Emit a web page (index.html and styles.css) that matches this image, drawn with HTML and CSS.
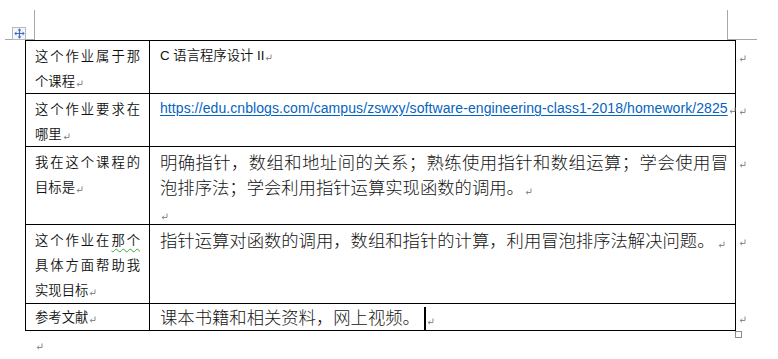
FILE: index.html
```html
<!DOCTYPE html>
<html lang="zh-CN">
<head>
<meta charset="utf-8">
<title>作业表</title>
<link rel="stylesheet" href="styles.css">
</head>
<body>
<div class="page">
  <div class="mark-line tl-v"></div>
  <div class="mark-line tl-h"></div>
  <div class="mark-line tr-v"></div>
  <div class="mark-line tr-h"></div>
  <div class="move-handle">
    <svg width="11" height="11" viewBox="0 0 11 11" aria-hidden="true">
      <path d="M5.5 1 V10 M1 5.5 H10" stroke="#3a6fc8" stroke-width="1.2" fill="none"/>
      <path d="M5.5 0.3 L3.6 2.4 H7.4 Z M5.5 10.7 L3.6 8.6 H7.4 Z M0.3 5.5 L2.4 3.6 V7.4 Z M10.7 5.5 L8.6 3.6 V7.4 Z" fill="#3a6fc8"/>
    </svg>
  </div>

  <table class="grid">
    <colgroup>
      <col class="c-label">
      <col class="c-body">
      <col class="c-end">
    </colgroup>
    <tr class="row">
      <td class="label">这个作业属于那个课程<svg class="pm" viewBox="0 0 7 7"><path d="M6 0.5 V4.5 H1.2 M3 2.7 L1.2 4.5 L3 6.3" /></svg></td>
      <td class="body small">C 语言程序设计 II<svg class="pm" viewBox="0 0 7 7"><path d="M6 0.5 V4.5 H1.2 M3 2.7 L1.2 4.5 L3 6.3" /></svg></td>
      <td class="end"><svg class="pm" viewBox="0 0 7 7"><path d="M6 0.5 V4.5 H1.2 M3 2.7 L1.2 4.5 L3 6.3" /></svg></td>
    </tr>
    <tr class="row">
      <td class="label">这个作业要求在哪里<svg class="pm" viewBox="0 0 7 7"><path d="M6 0.5 V4.5 H1.2 M3 2.7 L1.2 4.5 L3 6.3" /></svg></td>
      <td class="body small link-cell"><a class="link" href="#">https://edu.cnblogs.com/campus/zswxy/software-engineering-class1-2018/homework/2825</a><svg class="pm" viewBox="0 0 7 7"><path d="M6 0.5 V4.5 H1.2 M3 2.7 L1.2 4.5 L3 6.3" /></svg></td>
      <td class="end"><svg class="pm" viewBox="0 0 7 7"><path d="M6 0.5 V4.5 H1.2 M3 2.7 L1.2 4.5 L3 6.3" /></svg></td>
    </tr>
    <tr class="row">
      <td class="label">我在这个课程的目标是<svg class="pm" viewBox="0 0 7 7"><path d="M6 0.5 V4.5 H1.2 M3 2.7 L1.2 4.5 L3 6.3" /></svg></td>
      <td class="body big">
        <p class="para just">明确指针，数组和地址间的关系；熟练使用指针和数组运算；学会使用冒泡排序法；学会利用指针运算实现函数的调用。<svg class="pm" viewBox="0 0 7 7"><path d="M6 0.5 V4.5 H1.2 M3 2.7 L1.2 4.5 L3 6.3" /></svg></p>
        <p class="para"><svg class="pm" viewBox="0 0 7 7"><path d="M6 0.5 V4.5 H1.2 M3 2.7 L1.2 4.5 L3 6.3" /></svg></p>
      </td>
      <td class="end"><svg class="pm" viewBox="0 0 7 7"><path d="M6 0.5 V4.5 H1.2 M3 2.7 L1.2 4.5 L3 6.3" /></svg></td>
    </tr>
    <tr class="row row-4">
      <td class="label">这个作业在<span class="squiggle">那个</span>具体方面帮助我实现目标<svg class="pm" viewBox="0 0 7 7"><path d="M6 0.5 V4.5 H1.2 M3 2.7 L1.2 4.5 L3 6.3" /></svg></td>
      <td class="body big">指针运算对函数的调用，数组和指针的计算，利用冒泡排序法解决问题。<svg class="pm gap" viewBox="0 0 7 7"><path d="M6 0.5 V4.5 H1.2 M3 2.7 L1.2 4.5 L3 6.3" /></svg></td>
      <td class="end"><svg class="pm" viewBox="0 0 7 7"><path d="M6 0.5 V4.5 H1.2 M3 2.7 L1.2 4.5 L3 6.3" /></svg></td>
    </tr>
    <tr class="row row-5">
      <td class="label">参考文献<svg class="pm" viewBox="0 0 7 7"><path d="M6 0.5 V4.5 H1.2 M3 2.7 L1.2 4.5 L3 6.3" /></svg></td>
      <td class="body big">课本书籍和相关资料，网上视频。<span class="caret"></span><svg class="pm" viewBox="0 0 7 7"><path d="M6 0.5 V4.5 H1.2 M3 2.7 L1.2 4.5 L3 6.3" /></svg></td>
      <td class="end"><svg class="pm" viewBox="0 0 7 7"><path d="M6 0.5 V4.5 H1.2 M3 2.7 L1.2 4.5 L3 6.3" /></svg></td>
    </tr>
  </table>
  <div class="after"><svg class="pm" viewBox="0 0 7 7"><path d="M6 0.5 V4.5 H1.2 M3 2.7 L1.2 4.5 L3 6.3" /></svg></div>
  <div class="resize-handle"></div>
</div>
</body>
</html>
```

FILE: styles.css
```css
html, body {
  margin: 0;
  padding: 0;
  background: #ffffff;
}

.page {
  position: relative;
  width: 778px;
  height: 359px;
  box-sizing: border-box;
  padding: 40px 0 0 25px;
  font-family: "Noto Sans CJK SC", sans-serif;
  color: #111;
  overflow: hidden;
}

/* page corner marks */
.mark-line {
  position: absolute;
  background: #a8a8a8;
}
.tl-v { left: 34px; top: 10px; width: 1px; height: 30px; }
.tl-h { left: 5px; top: 39px; width: 30px; height: 1px; }
.tr-v { left: 727px; top: 10px; width: 1px; height: 30px; }
.tr-h { left: 727px; top: 39px; width: 30px; height: 1px; }

.move-handle {
  position: absolute;
  left: 12px;
  top: 27px;
  width: 12px;
  height: 11px;
  border: 1px solid #b8b8b8;
  background: #f7f7f7;
  display: flex;
  align-items: center;
  justify-content: center;
}

.resize-handle {
  position: absolute;
  left: 735px;
  top: 331px;
  width: 5px;
  height: 5px;
  border: 1px solid #8c8c8c;
  background: #fff;
}

/* table */
.grid {
  border-collapse: collapse;
  table-layout: fixed;
  width: 724px;
}
.c-label { width: 124px; }
.c-body { width: 586px; }
.c-end { width: 14px; }

.grid td {
  vertical-align: top;
  padding: 0;
}

.label {
  border: 1px solid #000;
  padding: 2px 9px 0 9px !important;
  font-size: 13.33px;
  font-weight: 350;
  line-height: 25px;
  text-align: justify;
  word-break: break-all;
}

.body {
  border: 1px solid #000;
  padding: 2px 7px 0 10px !important;
}

.small {
  font-family: "Liberation Sans", "Noto Sans CJK SC", sans-serif;
  font-size: 13.33px;
  font-weight: 350;
  line-height: 25px;
}

.link-cell {
  white-space: nowrap;
}

.link {
  font-size: 14px;
  font-weight: 400;
  letter-spacing: 0.08px;
  color: #0563c1;
  text-decoration: underline;
  text-underline-offset: 2px;
}

.big {
  font-family: "Noto Sans CJK SC", sans-serif;
  font-size: 17.33px;
  font-weight: 300;
  line-height: 25px;
  color: #141414;
}

.para {
  margin: 0;
}
.just {
  text-align: justify;
}

.end {
  padding: 2px 0 0 2px !important;
  line-height: 25px;
  font-size: 13px;
}

.row-4 .label { padding-bottom: 1px !important; }
.row-5 .label,
.row-5 .body,
.row-5 .end {
  padding-top: 0 !important;
  line-height: 26px;
}

.squiggle {
  text-decoration: underline wavy #3aa63a;
  text-decoration-thickness: 1px;
  text-underline-offset: 3px;
}

/* paragraph mark */
.pm {
  display: inline-block;
  width: 7px;
  height: 7px;
  margin-left: 1px;
  vertical-align: -1px;
}
.pm path {
  fill: none;
  stroke: #8a8a8a;
  stroke-width: 1;
}
.pm.gap { margin-left: 3px; }

.caret {
  display: inline-block;
  width: 2px;
  height: 23px;
  background: #000;
  margin-left: 4px;
  vertical-align: -6px;
}

.after {
  padding-left: 10px;
  line-height: 25px;
  font-size: 13px;
}
```
